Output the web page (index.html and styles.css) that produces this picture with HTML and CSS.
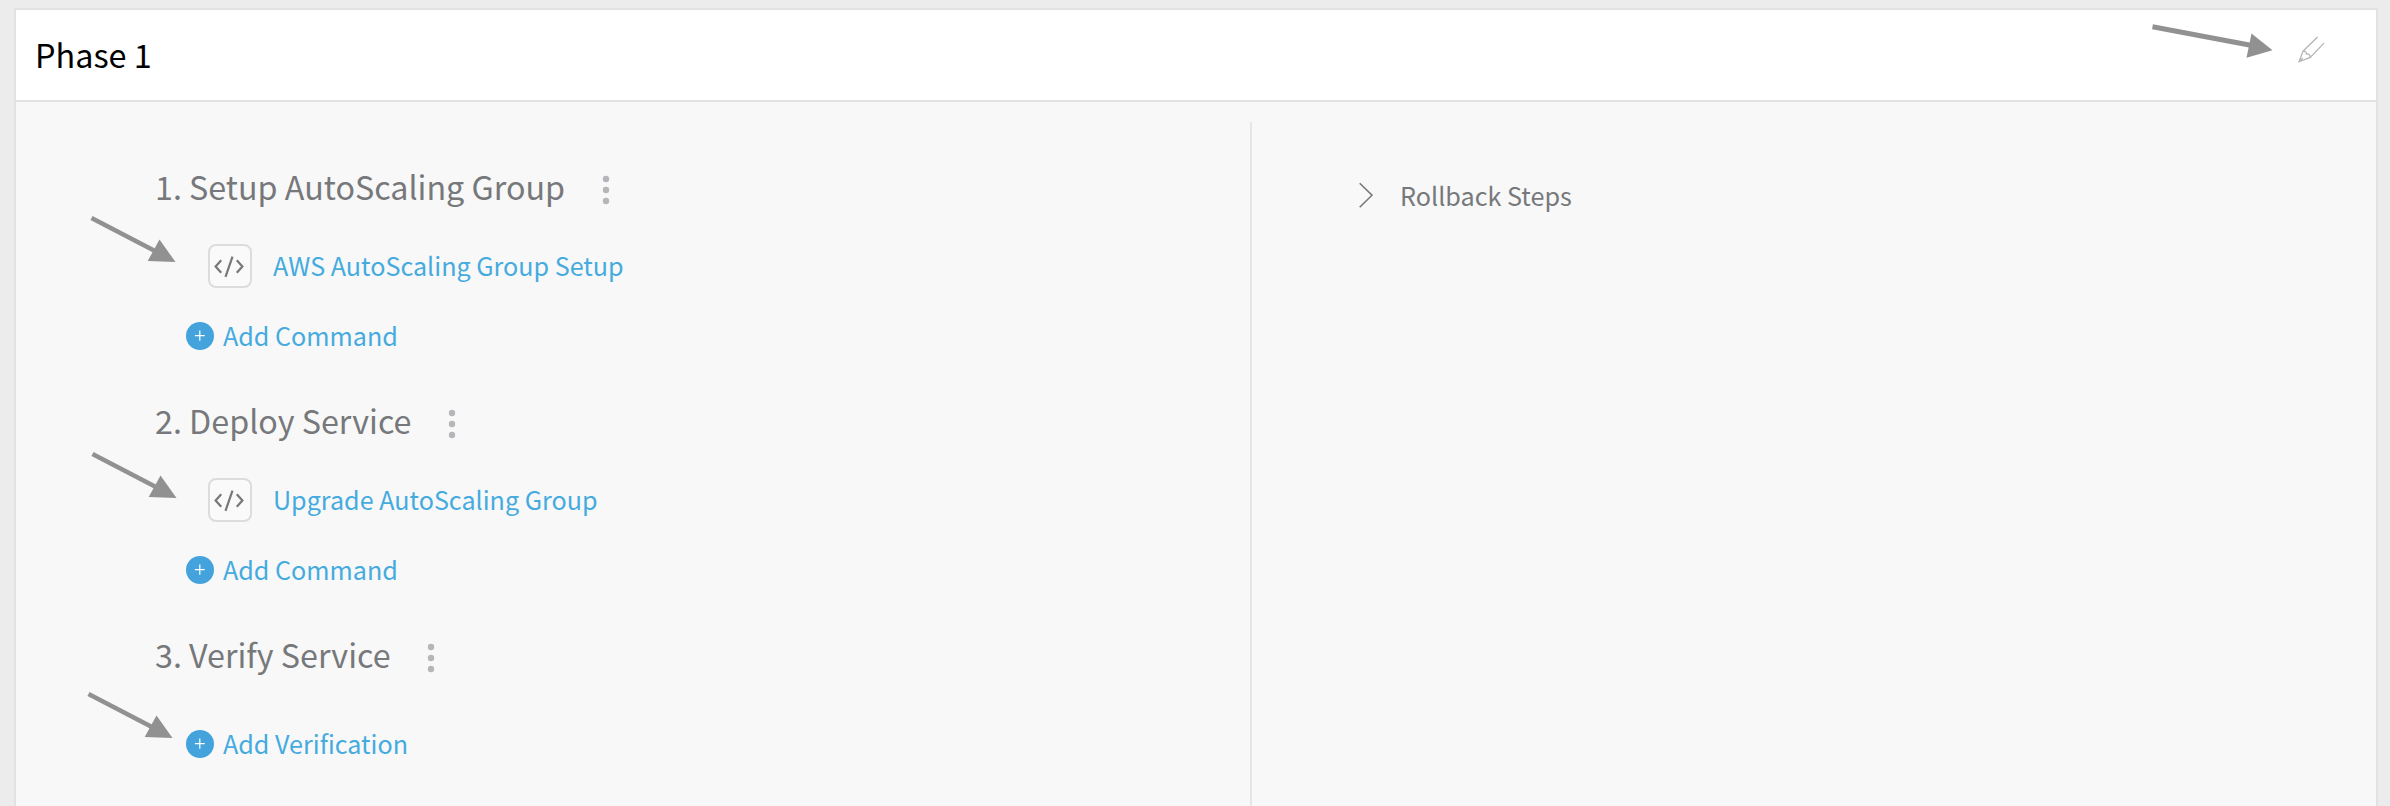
FILE: index.html
```html
<!DOCTYPE html>
<html lang="en">
<head>
<meta charset="utf-8">
<title>Phase 1</title>
<link rel="stylesheet" href="styles.css">
</head>
<body>
<svg class="defs" width="0" height="0" aria-hidden="true">
  <symbol id="code" viewBox="0 0 44 44"><path d="M13.200 16.200 7.600 22.500l5.600 6.300M28.800 16.200l5.600 6.300-5.600 6.300M24.500 12.600 17.500 32.800" fill="none" stroke="#77787b" stroke-width="2.200"/></symbol>
  <symbol id="dots" viewBox="0 0 8 30"><circle cx="4" cy="4" r="3.2"/><circle cx="4" cy="15" r="3.2"/><circle cx="4" cy="26" r="3.2"/></symbol>
  <symbol id="plus" viewBox="0 0 28 28"><circle cx="14" cy="14" r="14" fill="#44a3dc"/><path d="M8.9 13.700h9.800M13.800 8.500v10.300" stroke="#fff" stroke-width="1.200"/></symbol>
</svg>
<section class="phase">
  <header class="phase-header">
    <h1 class="phase-title">Phase 1</h1>
    <svg class="edit" width="28" height="28" viewBox="0 0 28 28"><path d="M20.600 1 6 15.200 2 25.800l11.200-4.400L27 7.200M6 15.200c2-.2 3.500.5 3.400 2.800 2.200-.5 3.800.8 3.800 3.400M2 25.800l3.800-3.800" fill="none" stroke="#b2b3b5" stroke-width="1.200"/></svg>
  </header>
  <div class="phase-body">
    <div class="steps">
      <div class="step">
        <h2 class="step-title"><span>1. Setup AutoScaling Group</span><svg class="dots"><use href="#dots"/></svg></h2>
        <div class="command"><span class="command-icon"><svg width="44" height="44"><use href="#code"/></svg></span><a class="link">AWS AutoScaling Group Setup</a></div>
        <div class="add"><svg width="28" height="28"><use href="#plus"/></svg><a class="link">Add Command</a></div>
      </div>
      <div class="step">
        <h2 class="step-title"><span>2. Deploy Service</span><svg class="dots"><use href="#dots"/></svg></h2>
        <div class="command"><span class="command-icon"><svg width="44" height="44"><use href="#code"/></svg></span><a class="link">Upgrade AutoScaling Group</a></div>
        <div class="add"><svg width="28" height="28"><use href="#plus"/></svg><a class="link">Add Command</a></div>
      </div>
      <div class="step step-last">
        <h2 class="step-title"><span>3. Verify Service</span><svg class="dots"><use href="#dots"/></svg></h2>
        <div class="add add-only"><svg width="28" height="28"><use href="#plus"/></svg><a class="link">Add Verification</a></div>
      </div>
    </div>
    <div class="rollback">
      <svg width="14" height="26" viewBox="0 0 14 26"><path d="M.7 1.200 13 13.200.7 25.300" fill="none" stroke="#77787b" stroke-width="1.600"/></svg>
      <span class="rollback-label">Rollback Steps</span>
    </div>
  </div>
</section>
<svg class="arrows" width="2390" height="806" viewBox="0 0 2390 806" fill="#919191" stroke="#919191">
  <path d="M2152.500 26.800 2252 45.500" stroke-width="5"/><path d="M2251.500 33.500 2272.500 50.300 2246.500 57.700Z" stroke="none"/>
  <path d="M91.500 218 154 250.500" stroke-width="4.600"/><path d="M159.500 239.500 175.500 262 147.700 261Z" stroke="none"/>
  <path d="M92.500 454 155 486.500" stroke-width="4.600"/><path d="M160.500 475.500 176.500 498 148.700 497Z" stroke="none"/>
  <path d="M88.500 694 151 726.500" stroke-width="4.600"/><path d="M156.500 715.500 172.500 738 144.700 737Z" stroke="none"/>
</svg>
</body>
</html>
```

FILE: styles.css
```css
* { box-sizing: border-box; }
body {
  margin: 0;
  height: 806px;
  padding: 8px 12px 0 14px;
  overflow: hidden;
  background: #ececec;
  color: #77787b;
  font-family: "Noto Sans CJK SC", "Noto Sans", sans-serif;
  font-size: 25.13px;
}
.defs { position: absolute; }
.phase {
  display: flex;
  flex-direction: column;
  height: 798px;
  border: 2px solid #e2e2e2;
  border-bottom: 0;
  background: #f8f8f8;
}
.phase-header {
  display: flex;
  flex: none;
  justify-content: space-between;
  height: 92px;
  padding: 0 51px 0 19px;
  border-bottom: 2px solid #e2e2e2;
  background: #fff;
}
.phase-title {
  margin: 0;
  color: #000;
  font-size: 32.4px;
  font-weight: 400;
  line-height: 88px;
}
.edit { margin-top: 26px; }
.phase-body { display: flex; flex: 1; min-height: 0; padding-top: 20px; }
.steps {
  width: 1236px;
  padding: 44px 0 0 139px;
  border-right: 2px solid #e6e6e6;
}
.step { height: 234px; }
.step-last { height: auto; }
.step-title {
  display: flex;
  align-items: center;
  gap: 36.5px;
  height: 40px;
  margin: 0;
  font-size: 32.26px;
  font-weight: 400;
  line-height: 40px;
}
.dots { width: 8px; height: 30px; margin-top: 8px; fill: #b5b6b9; }
.command {
  display: flex;
  align-items: center;
  gap: 21px;
  height: 44px;
  margin: 38px 0 0 53px;
}
.command-icon {
  display: flex;
  align-items: center;
  justify-content: center;
  width: 44px;
  height: 44px;
  border: 2px solid #dcdcdc;
  border-radius: 8px;
  background: #fafafa;
}
.command-icon svg { flex: none; }
.link { color: #45abdf; line-height: 28px; padding-bottom: 2px; }
.add {
  display: flex;
  align-items: center;
  gap: 9px;
  height: 28px;
  margin: 34px 0 0 31px;
}
.add-only { margin-top: 56px; }
.rollback {
  display: flex;
  align-items: flex-start;
  gap: 27px;
  padding: 60px 0 0 107px;
}
.rollback-label { font-size: 25.2px; line-height: 27px; }
.arrows { position: absolute; top: 0; left: 0; pointer-events: none; }
```
